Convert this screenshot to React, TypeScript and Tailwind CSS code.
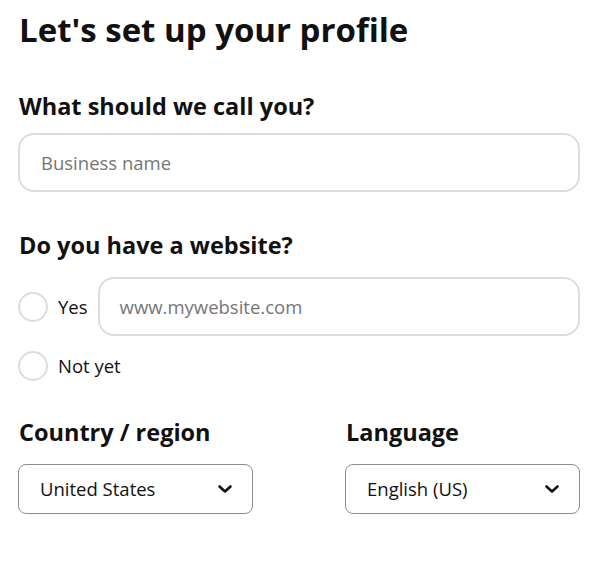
import React from "react";

function Chevron() {
  return (
    <svg width="16" height="10" viewBox="0 0 16 10" fill="none">
      <path d="M2.5 2.5 L8 7.5 L13.5 2.5" stroke="#111" strokeWidth="2.6" strokeLinecap="round" strokeLinejoin="round" />
    </svg>
  );
}

function Radio({ label }: { label: string }) {
  return (
    <label className="flex items-center gap-[10px] shrink-0">
      <span className="w-[30px] h-[30px] rounded-full border-2 border-[#dddddd] bg-white" />
      <span className="text-[18.5px] text-[#111]">{label}</span>
    </label>
  );
}

function Select({ value }: { value: string }) {
  return (
    <div className="h-[50px] rounded-[8px] border border-[#8e8e8e] flex items-center justify-between pl-[21px] pr-[19px]">
      <span className="text-[18.5px] text-[#111]">{value}</span>
      <Chevron />
    </div>
  );
}

export default function App() {
  return (
    <div
      className="bg-white w-[603px] h-[567px] pl-[18px] pr-[23px] pt-[8px] text-[#111]"
      style={{ fontFamily: '"Open Sans", "Noto Sans", sans-serif' }}
    >
      <h1 className="text-[33px] font-bold leading-[44px] pl-[1px]">Let's set up your profile</h1>
      <h2 className="mt-[38px] text-[23.5px] font-bold leading-[32px] pl-[1px]">What should we call you?</h2>
      <div className="mt-[11px] h-[59px] rounded-[16px] border-2 border-[#dddddd] flex items-center pl-[21px]">
        <span className="text-[18.5px] text-[#767676]">Business name</span>
      </div>
      <h2 className="mt-[37px] text-[23.5px] font-bold leading-[32px] pl-[1px]">Do you have a website?</h2>
      <div className="mt-[16px] flex items-center gap-[10px]">
        <Radio label="Yes" />
        <div className="flex-1 h-[59px] rounded-[16px] border-2 border-[#dddddd] flex items-center pl-[20px]">
          <span className="text-[18.5px] text-[#767676]">www.mywebsite.com</span>
        </div>
      </div>
      <div className="mt-[15px]">
        <Radio label="Not yet" />
      </div>
      <div className="mt-[35px] grid grid-cols-2 gap-[92px]">
        <div>
          <h2 className="text-[23.5px] font-bold leading-[32px] pl-[1px]">Country / region</h2>
          <div className="mt-[16px]">
            <Select value="United States" />
          </div>
        </div>
        <div>
          <h2 className="text-[23.5px] font-bold leading-[32px] pl-[1px]">Language</h2>
          <div className="mt-[16px]">
            <Select value="English (US)" />
          </div>
        </div>
      </div>
    </div>
  );
}
